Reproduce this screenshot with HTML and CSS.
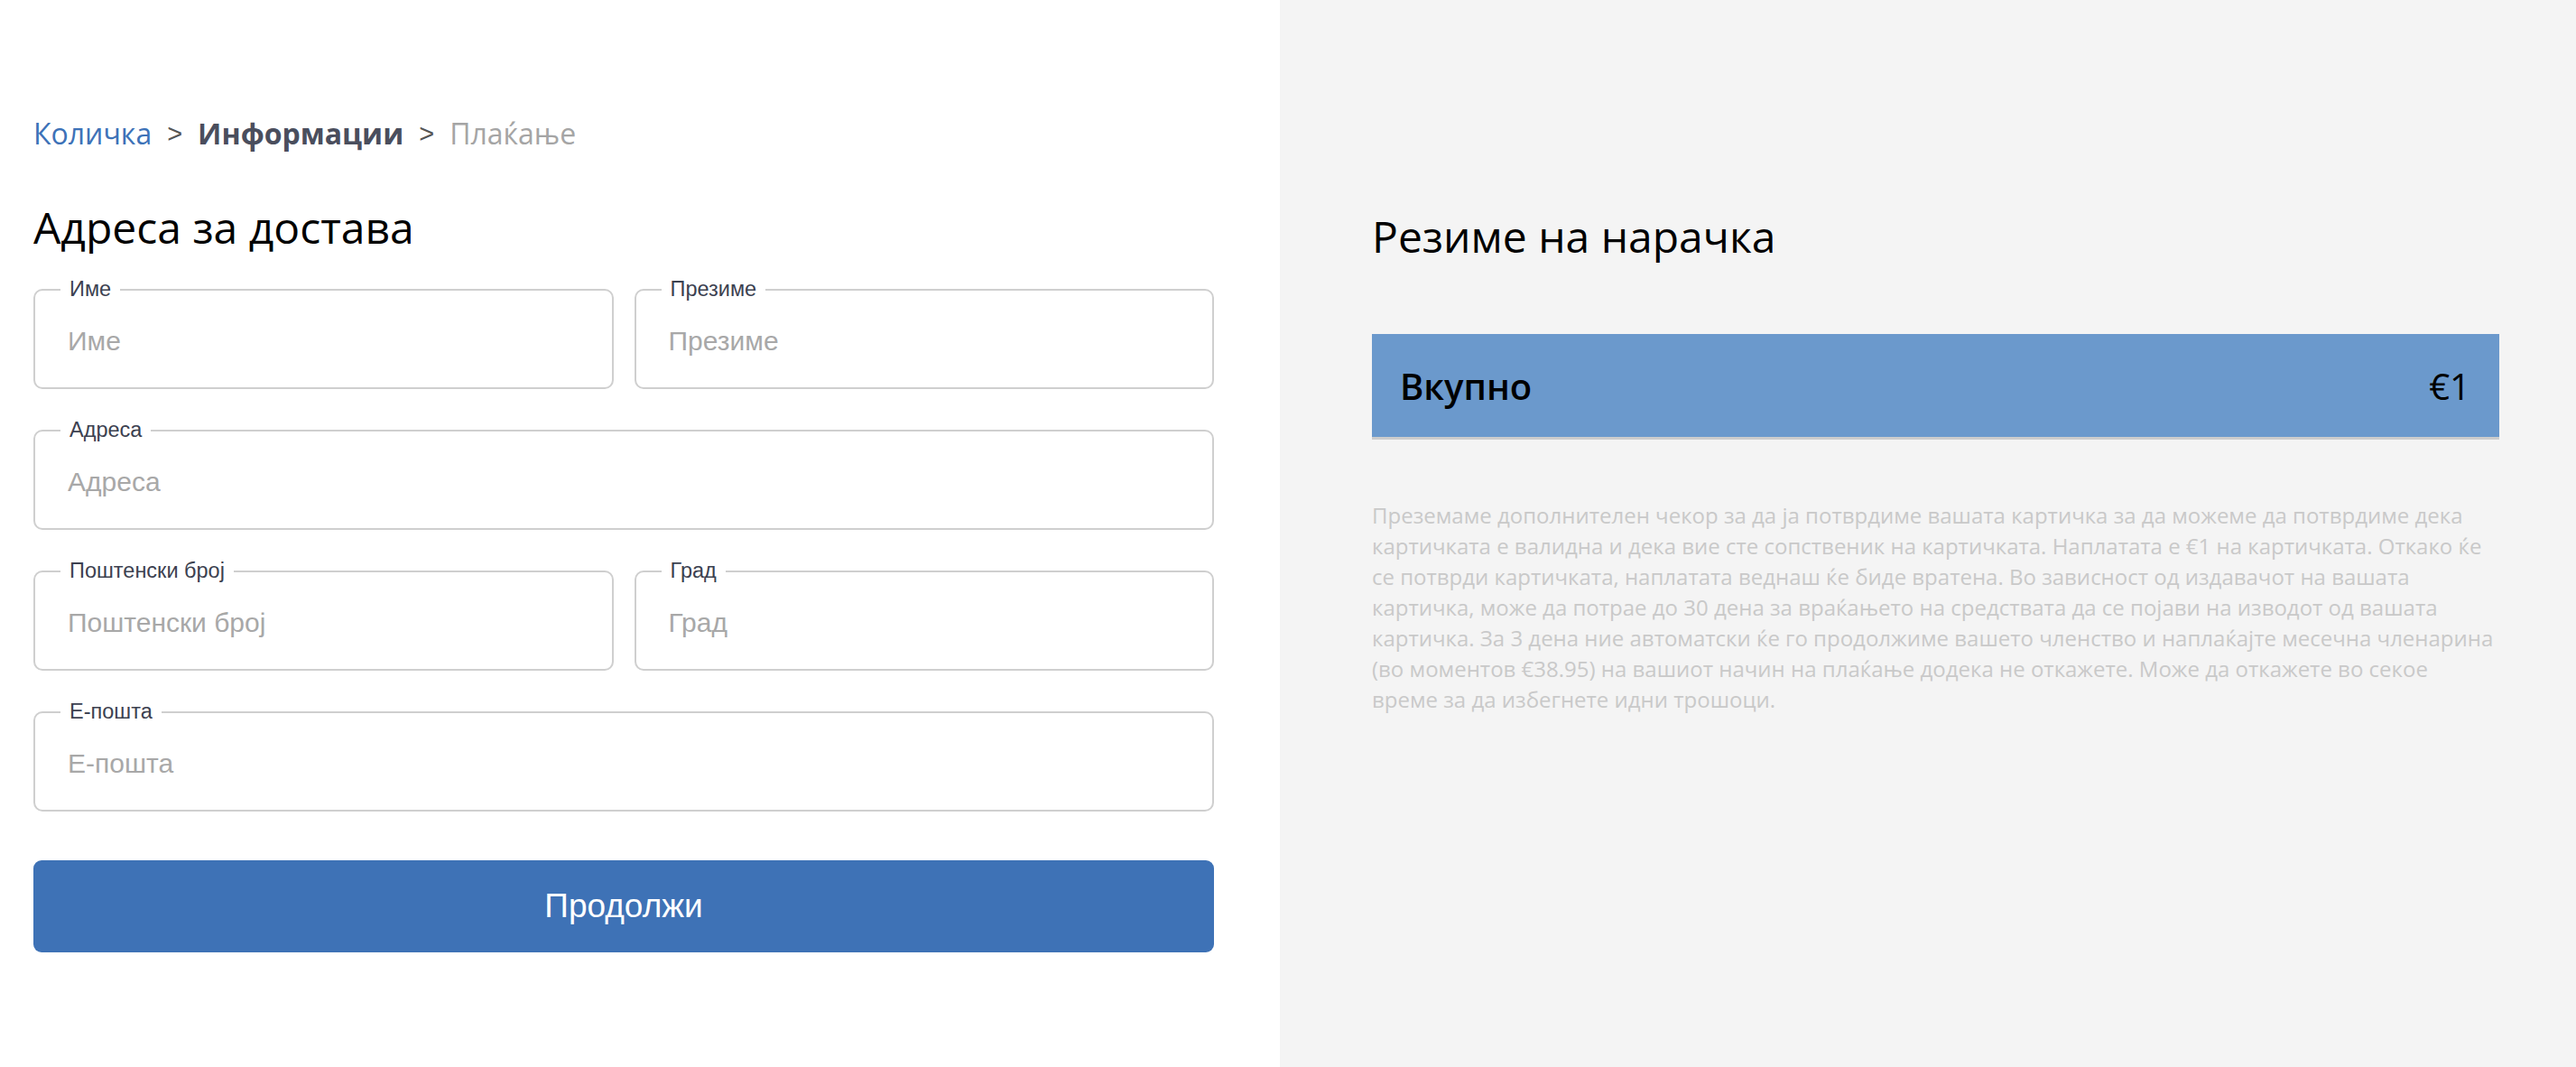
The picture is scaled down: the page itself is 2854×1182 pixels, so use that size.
FILE: index.html
```html
<!DOCTYPE html>
<html lang="mk">
<head>
  <meta charset="UTF-8" />
  <meta name="viewport" content="width=device-width, initial-scale=1.0"/>
  <title>Наплата</title>
  <link rel="stylesheet" href="styles.css">
</head>
<body>
  <div class="checkout">
    <section class="info">
      <nav class="crumbs">
        <a href="#" class="crumb-link">Количка</a>
        <span class="sep">&gt;</span>
        <span class="crumb-current">Информации</span>
        <span class="sep">&gt;</span>
        <span class="crumb-next">Плаќање</span>
      </nav>

      <h2 class="title">Адреса за достава</h2>

      <form class="address-form">
        <div class="row">
          <fieldset class="field">
            <legend>Име</legend>
            <input type="text" placeholder="Име" />
          </fieldset>
          <fieldset class="field">
            <legend>Презиме</legend>
            <input type="text" placeholder="Презиме" />
          </fieldset>
        </div>
        <fieldset class="field">
          <legend>Адреса</legend>
          <input type="text" placeholder="Адреса" />
        </fieldset>
        <div class="row">
          <fieldset class="field">
            <legend>Поштенски број</legend>
            <input type="text" placeholder="Поштенски број" />
          </fieldset>
          <fieldset class="field">
            <legend>Град</legend>
            <input type="text" placeholder="Град" />
          </fieldset>
        </div>
        <fieldset class="field">
          <legend>Е-пошта</legend>
          <input type="email" placeholder="Е-пошта" />
        </fieldset>

        <button type="button" class="continue">Продолжи</button>
      </form>
    </section>

    <aside class="summary">
      <h2 class="title summary-title">Резиме на нарачка</h2>
      <div class="total">
        <span>Вкупно</span>
        <span class="price">€1</span>
      </div>
      <p class="note">
        Преземаме дополнителен чекор за да ја потврдиме вашата картичка за да можеме да потврдиме дека
        картичката е валидна и дека вие сте сопственик на картичката. Наплатата е €1 на картичката. Откако ќе
        се потврди картичката, наплатата веднаш ќе биде вратена. Во зависност од издавачот на вашата
        картичка, може да потрае до 30 дена за враќањето на средствата да се појави на изводот од вашата
        картичка. За 3 дена ние автоматски ќе го продолжиме вашето членство и наплаќајте месечна членарина
        (во моментов €38.95) на вашиот начин на плаќање додека не откажете. Може да откажете во секое
        време за да избегнете идни трошоци.
      </p>
    </aside>
  </div>
</body>
</html>
```

FILE: styles.css
```css
* {
  margin: 0;
  padding: 0;
  box-sizing: border-box;
}

body, html {
  min-height: 100%;
  font-family: "Open Sans", sans-serif;
  background: #fff;
}

.checkout {
  display: grid;
  grid-template-columns: 1418px 1fr;
  min-height: 100vh;
}

.info {
  padding: 126px 73px 60px 37px;
}

.crumbs {
  font-size: 32px;
  line-height: 44px;
  color: #555;
  display: flex;
  align-items: center;
}

.crumb-link {
  color: #3d72b8;
  text-decoration: none;
}

.sep {
  margin: 0 17px;
  font-family: "Liberation Sans", sans-serif;
  font-size: 29px;
  color: #555;
}

.crumb-current {
  font-weight: 700;
  color: #4a4e5d;
}

.crumb-next {
  color: #a5a5a5;
}

.title {
  font-size: 48px;
  font-weight: 400;
  line-height: 65px;
  color: #000;
  margin-top: 49px;
}

.address-form {
  margin-top: 23px;
  display: flex;
  flex-direction: column;
  gap: 32px;
}

.row {
  display: grid;
  grid-template-columns: 1fr 1fr;
  gap: 23px;
}

.field {
  border: 2px solid #cfcfcf;
  border-radius: 10px;
  padding: 8px 28px 15px;
  min-width: 0;
  font-family: "Liberation Sans", sans-serif;
}

.field legend {
  padding: 0 10px;
  font-size: 23.5px;
  line-height: 27px;
  color: #3c4150;
}

.field input {
  display: block;
  width: 100%;
  height: 72px;
  padding: 0 8px;
  border: none;
  outline: none;
  background: transparent;
  font-family: "Liberation Sans", sans-serif;
  font-size: 30px;
  color: #333;
}

.field input::placeholder {
  color: #a8a8a8;
}

.continue {
  margin-top: 22px;
  height: 102px;
  border: none;
  border-radius: 9px;
  background-color: #3e72b6;
  color: #fff;
  font-family: "Liberation Sans", sans-serif;
  font-size: 37px;
  cursor: pointer;
}

.summary {
  background-color: #f4f4f4;
  padding: 229px 85px 60px 102px;
}

.summary-title {
  margin-top: 0;
}

.total {
  margin-top: 76px;
  height: 117px;
  padding: 0 32px 0 31px;
  background-color: #6b99cc;
  border-bottom: 3px solid #cccccc;
  display: flex;
  align-items: center;
  justify-content: space-between;
  font-size: 40px;
  font-weight: 600;
  color: #000;
}

.total .price {
  font-weight: 400;
}

.note {
  margin-top: 67px;
  font-size: 24px;
  line-height: 34px;
  color: #c9c9c9;
}
```
